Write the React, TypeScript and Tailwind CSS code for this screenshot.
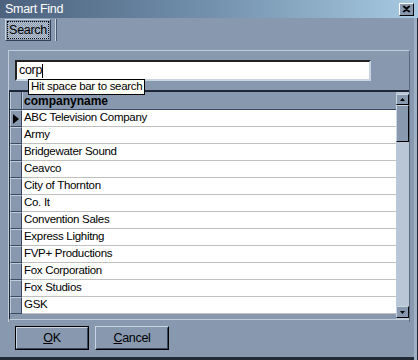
import React from "react";

const rows = [
  "ABC Television Company",
  "Army",
  "Bridgewater Sound",
  "Ceavco",
  "City of Thornton",
  "Co. It",
  "Convention Sales",
  "Express Lighitng",
  "FVP+ Productions",
  "Fox Corporation",
  "Fox Studios",
  "GSK",
];

export default function App() {
  return (
    <div
      className="w-[418px] h-[360px] bg-[#8899af] flex flex-col relative overflow-hidden text-[11.5px] tracking-[-0.3px] text-black"
      style={{ fontFamily: '"Liberation Sans", Arial, sans-serif' }}
    >
      {/* title bar */}
      <div className="h-[18px] flex items-center justify-between pl-[5px] pr-[4px] bg-gradient-to-r from-[#4c627e] via-[#7290ac] to-[#a8cae2]">
        <span className="text-white text-[12.5px] leading-none">Smart Find</span>
        <div className="w-[15px] h-[13px] bg-[#8899af] border border-t-white border-l-white border-r-black border-b-black flex items-center justify-center">
          <svg width="9" height="8" viewBox="0 0 9 8">
            <path d="M1 1 L7 7 M2 1 L8 7 M7 1 L1 7 M8 1 L2 7" stroke="black" strokeWidth="1.2" />
          </svg>
        </div>
      </div>
      {/* tab row */}
      <div className="h-[24px] flex items-start pl-[5px] pt-[1px]">
        <div className="h-[22px] flex items-stretch">
          <div className="w-[46px] border border-t-[#c8d4e2] border-l-[#c8d4e2] border-r-[#30405a] border-b-[#30405a] p-[1px]">
            <div
              className="h-full flex items-center justify-center text-[12.5px] border border-dotted border-black"
              style={{
                backgroundImage:
                  "conic-gradient(#b9c5d3 25%, #8899af 0 50%, #b9c5d3 0 75%, #8899af 0)",
                backgroundSize: "2px 2px",
              }}
            >
              Search
            </div>
          </div>
          <div className="w-[4px]" />
          <div className="w-[2px] border-l border-l-[#c8d4e2] border-r border-r-[#4a5a72]" />
        </div>
      </div>
      {/* group frame */}
      <div className="mx-[8px] mt-[8px] h-[272px] border-t border-t-[#c0ccda] border-l border-l-[#c0ccda] border-r border-r-[#5a6a82] flex flex-col">
        <div className="pl-[6px] pr-[38px] pt-[9px] relative">
          <div className="h-[21px] bg-white border-2 border-t-[#222] border-l-[#222] border-r-[#c8d4e2] border-b-[#c8d4e2] flex items-center pl-[2px] text-[12.5px]">
            corp<span className="inline-block w-[1px] h-[14px] bg-black" />
          </div>
          <div className="absolute left-[19px] top-[28px] h-[16px] px-[2px] bg-[#fffff8] border border-black flex items-center z-10 whitespace-nowrap">
            Hit space bar to search
          </div>
        </div>
        {/* grid */}
        <div className="mt-[9px] h-[230px] border-t-2 border-t-[#1c2636] border-l border-l-[#1c2636] border-b border-b-[#c0ccda] flex">
          <div className="flex-1 flex flex-col">
            {/* header */}
            <div className="h-[18px] flex bg-[#8899af] border-b border-b-[#3a4a60]">
              <div className="w-[12px] border-r border-r-[#3a4a60] border-l border-l-[#c0ccda]" />
              <div className="flex-1 flex items-center pl-[1px] font-bold text-[12px] tracking-[0px] border-l border-l-[#c0ccda]">
                companyname
              </div>
            </div>
            {rows.map((r, i) => (
              <div key={r} className="h-[17px] flex">
                <div className="w-[12px] bg-[#8899af] border-l border-l-[#c0ccda] border-t border-t-[#c0ccda] border-r border-r-[#3a4a60] border-b border-b-[#3a4a60] flex items-center justify-center">
                  {i === 0 && (
                    <svg width="6" height="10" viewBox="0 0 6 10">
                      <path d="M0 0 L6 5 L0 10 Z" fill="black" />
                    </svg>
                  )}
                </div>
                <div className="flex-1 bg-white border-b border-b-[#c0c0c0] flex items-center pl-[2px]">
                  {r}
                </div>
              </div>
            ))}
            <div className="flex-1 bg-[#8899af]" />
          </div>
          {/* scrollbar */}
          <div className="w-[13px] flex flex-col bg-[#b8c6d6] pt-[2px]">
            <div className="h-[11px] bg-[#8899af] border border-t-[#c8d4e2] border-l-[#c8d4e2] border-r-black border-b-black flex items-center justify-center">
              <svg width="5" height="3" viewBox="0 0 5 3">
                <path d="M2.5 0 L5 3 L0 3 Z" fill="black" />
              </svg>
            </div>
            <div className="h-[37px] bg-[#8899af] border border-t-[#c8d4e2] border-l-[#c8d4e2] border-r-black border-b-black" />
            <div className="flex-1" />
            <div className="h-[12px] mb-[1px] bg-[#8899af] border border-t-[#c8d4e2] border-l-[#c8d4e2] border-r-black border-b-black flex items-center justify-center">
              <svg width="5" height="3" viewBox="0 0 5 3">
                <path d="M0 0 L5 0 L2.5 3 Z" fill="black" />
              </svg>
            </div>
          </div>
        </div>
      </div>
      {/* buttons */}
      <div className="flex gap-[6px] pl-[15px] mt-[4px]">
        <div className="w-[74px] h-[24px] border border-black">
          <div className="w-full h-full border border-t-[#c8d4e2] border-l-[#c8d4e2] border-r-[#3a4a60] border-b-[#3a4a60] flex items-center justify-center text-[12.5px]">
            <span><u>O</u>K</span>
          </div>
        </div>
        <div className="w-[74px] h-[24px] border border-t-[#c8d4e2] border-l-[#c8d4e2] border-r-black border-b-black">
          <div className="w-full h-full border border-transparent border-r-[#3a4a60] border-b-[#3a4a60] flex items-center justify-center text-[12.5px]">
            <span><u>C</u>ancel</span>
          </div>
        </div>
      </div>
      <div className="absolute left-0 right-0 bottom-0 h-[3px] bg-[#222a36]" />
      <div className="absolute top-[18px] right-0 bottom-0 w-[4px] bg-[#a0b0c4] border-r border-r-[#222a36]" />
    </div>
  );
}
